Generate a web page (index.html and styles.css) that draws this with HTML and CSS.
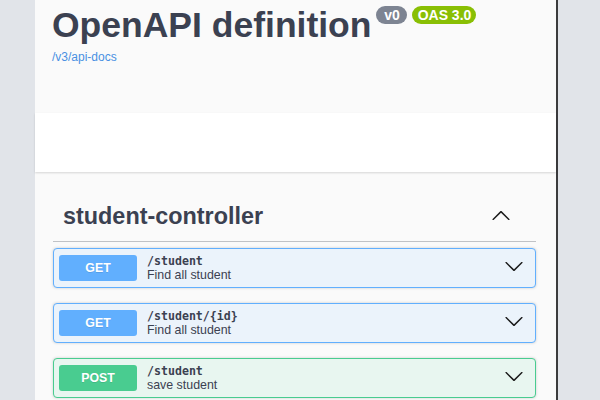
FILE: index.html
```html
<!DOCTYPE html>
<html lang="en">
<head>
<meta charset="utf-8">
<title>Swagger UI</title>
<link rel="stylesheet" href="styles.css">
</head>
<body>
<div class="panel">
  <header class="info">
    <div class="title-row">
      <h1 class="title">OpenAPI definition</h1>
      <span class="badge badge-version">v0</span>
      <span class="badge badge-oas">OAS 3.0</span>
    </div>
    <a class="spec-link" href="#">/v3/api-docs</a>
  </header>
  <div class="scheme"></div>
  <section class="tag-section">
    <div class="tag-header">
      <h3 class="tag-name">student-controller</h3>
      <svg class="chev chev-up" width="20" height="20" viewBox="0 0 20 20"><path d="M17.418 14.891c.272.268.709.268.979 0s.271-.701 0-.969l-7.908-7.830c-.27-.268-.707-.268-.979 0l-7.908 7.830c-.27.268-.27.701 0 .969.271.268.709.268.979 0L10 7.75l7.418 7.141z"/></svg>
    </div>
    <div class="opblock opblock-get">
      <span class="method">GET</span>
      <div class="summary-text">
        <div class="path">/student</div>
        <div class="desc">Find all student</div>
      </div>
      <svg class="chev chev-down" width="20" height="20" viewBox="0 0 20 20"><path d="M17.418 6.109c.272-.268.709-.268.979 0s.271.701 0 .969l-7.908 7.83c-.27.268-.707.268-.979 0l-7.908-7.830c-.27-.268-.27-.701 0-.969.271-.268.709-.268.979 0L10 13.25l7.418-7.141z"/></svg>
    </div>
    <div class="opblock opblock-get">
      <span class="method">GET</span>
      <div class="summary-text">
        <div class="path">/student/{id}</div>
        <div class="desc">Find all student</div>
      </div>
      <svg class="chev chev-down" width="20" height="20" viewBox="0 0 20 20"><path d="M17.418 6.109c.272-.268.709-.268.979 0s.271.701 0 .969l-7.908 7.83c-.27.268-.707.268-.979 0l-7.908-7.830c-.27-.268-.27-.701 0-.969.271-.268.709-.268.979 0L10 13.25l7.418-7.141z"/></svg>
    </div>
    <div class="opblock opblock-post">
      <span class="method">POST</span>
      <div class="summary-text">
        <div class="path">/student</div>
        <div class="desc">save student</div>
      </div>
      <svg class="chev chev-down" width="20" height="20" viewBox="0 0 20 20"><path d="M17.418 6.109c.272-.268.709-.268.979 0s.271.701 0 .969l-7.908 7.83c-.27.268-.707.268-.979 0l-7.908-7.830c-.27-.268-.27-.701 0-.969.271-.268.709-.268.979 0L10 13.25l7.418-7.141z"/></svg>
    </div>
  </section>
</div>
</body>
</html>
```
FILE: styles.css
```css
html, body {
  margin: 0;
  padding: 0;
  height: 100%;
  overflow: hidden;
}
body {
  background: #e1e4e9;
  font-family: "Liberation Sans", Arial, sans-serif;
  color: #3b4151;
}
.panel {
  margin-left: 35px;
  width: 521px;
  min-height: 400px;
  background: #fafafa;
  border-right: 2px solid #3b3b3d;
}
.info {
  height: 113px;
  box-sizing: border-box;
  padding: 4px 0 0 17px;
}
.title-row {
  display: flex;
  align-items: flex-start;
}
.title {
  margin: 0;
  font: bold 35.5px/42px "Liberation Sans", Arial, sans-serif;
  color: #3b4151;
}
.badge {
  margin: 2px 0 0 5px;
  height: 18px;
  line-height: 18px;
  border-radius: 9px;
  font: bold 14px/18px "Liberation Sans", Arial, sans-serif;
  color: #fff;
  text-align: center;
}
.badge-version {
  width: 31px;
  background: #7d8492;
}
.badge-oas {
  width: 64px;
  background: #89bf04;
}
.spec-link {
  display: block;
  margin-top: 4px;
  font: 12px/14px "Liberation Sans", Arial, sans-serif;
  color: #4990e2;
  text-decoration: none;
}
.scheme {
  height: 59px;
  background: #fff;
  box-shadow: 0 1px 2px 0 rgba(0, 0, 0, 0.15);
}
.tag-section {
  padding: 19px 20px 0 18px;
}
.tag-header {
  display: flex;
  align-items: center;
  justify-content: space-between;
  padding: 10px 20px 10px 10px;
  border-bottom: 1px solid rgba(59, 65, 81, 0.3);
  margin-bottom: 6px;
}
.tag-name {
  margin: 0;
  font: bold 23.4px/30px "Liberation Sans", Arial, sans-serif;
  color: #3b4151;
}
.chev {
  flex: none;
  fill: #1a1a1a;
}
.chev-up {
  margin-right: 5px;
  margin-bottom: 2px;
}
.opblock {
  display: flex;
  align-items: center;
  padding: 5px;
  border: 1px solid;
  border-radius: 4px;
  margin-bottom: 15px;
  box-shadow: 0 0 3px rgba(0, 0, 0, 0.19);
}
.opblock-get {
  background: #ebf3fb;
  border-color: #61affe;
}
.opblock-get .method {
  background: #61affe;
}
.opblock-post {
  background: #e8f6f0;
  border-color: #49cc90;
}
.opblock-post .method {
  background: #49cc90;
}
.method {
  flex: none;
  width: 78px;
  height: 26px;
  border-radius: 3px;
  font: bold 12.3px/26px "Liberation Sans", Arial, sans-serif;
  color: #fff;
  text-align: center;
  text-shadow: 0 1px 0 rgba(0, 0, 0, 0.1);
}
.summary-text {
  flex: 1;
  padding-left: 10px;
}
.path {
  font: bold 11.6px/14px "DejaVu Sans Mono", monospace;
  color: #3b4151;
}
.desc {
  font: 12.4px/14px "Liberation Sans", Arial, sans-serif;
  color: #3b4151;
}
.chev-down {
  margin-right: 6px;
  margin-bottom: 4px;
}
```
